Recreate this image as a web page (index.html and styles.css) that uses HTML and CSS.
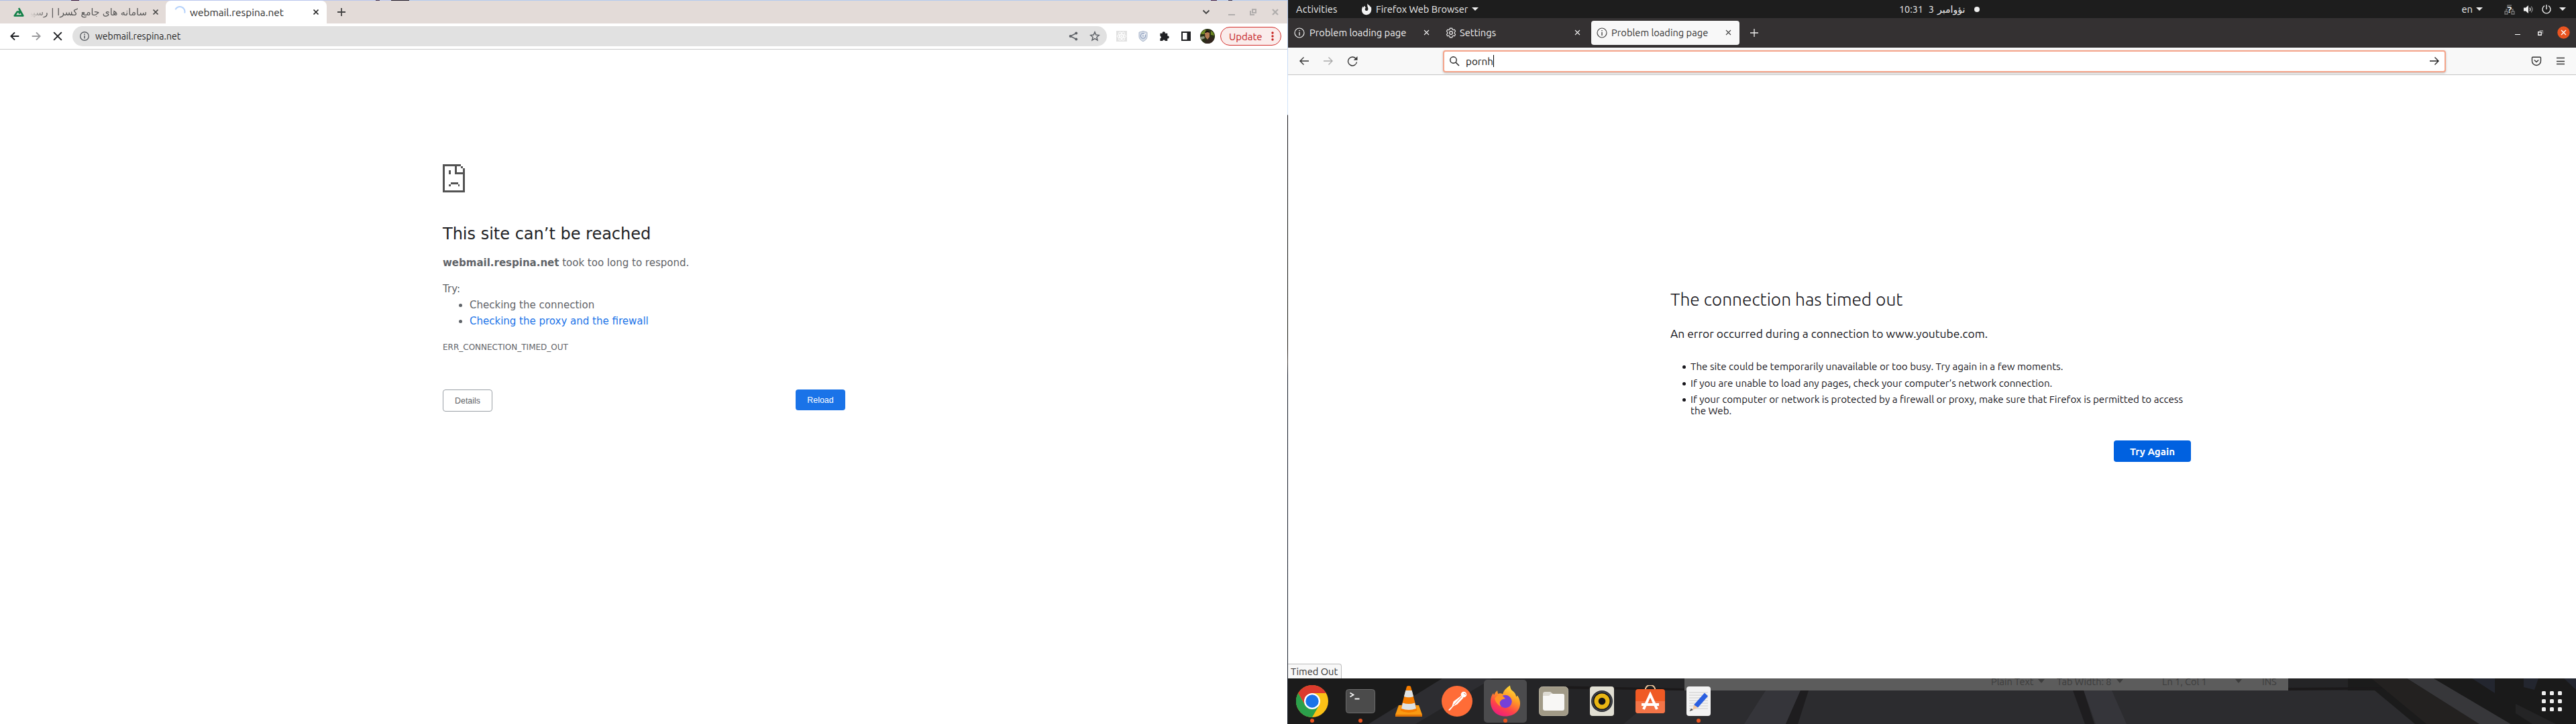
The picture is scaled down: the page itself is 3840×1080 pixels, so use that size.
FILE: index.html
```html
<!DOCTYPE html>
<html lang="en">
<head>
<meta charset="utf-8">
<title>Desktop</title>
<link rel="stylesheet" href="styles.css">
</head>
<body>
<div class="desktop">
  <section class="chrome">
    <div class="wallpaper-top"></div>
    <div class="c-tabs">
      <div class="c-tab">
        <svg class="fav" width="18" height="18" viewBox="0 0 18 18"><path d="M9 3.2 15.3 14.5H2.7L6.8 8.5H11L9.2 11.5" fill="none" stroke="#128048" stroke-width="2.6" stroke-linejoin="round"/></svg>
        <div class="c-title-fa" dir="rtl">سامانه های جامع کسرا | رسپینا</div>
        <svg class="x1" width="10" height="10" viewBox="0 0 10 10"><path d="M1.5 1.5l7 7m0-7l-7 7" stroke="#444" stroke-width="1.7"/></svg>
      </div>
      <div class="c-tab c-active">
        <svg class="spin" width="18" height="18" viewBox="0 0 18 18"><path d="M2.4 5.2A7.4 7.4 0 0 1 16.2 10.4" fill="none" stroke="#b5d2fb" stroke-width="2"/></svg>
        <div class="c-title">webmail.respina.net</div>
        <svg class="x2" width="10" height="10" viewBox="0 0 10 10"><path d="M1.5 1.5l7 7m0-7l-7 7" stroke="#222" stroke-width="1.7"/></svg>
      </div>
      <svg class="c-plus" width="14" height="14" viewBox="0 0 14 14"><path d="M7 1v12M1 7h12" stroke="#444" stroke-width="1.8"/></svg>
      <div class="c-win">
        <svg width="12" height="8" viewBox="0 0 12 8"><path d="M1.5 1.5L6 6l4.500-4.500" fill="none" stroke="#444" stroke-width="1.9"/></svg>
        <svg class="c-min" width="10" height="12" viewBox="0 0 10 12"><path d="M0 10h10" stroke="#b0adac" stroke-width="2"/></svg>
        <svg class="c-res" width="10" height="10" viewBox="0 0 10 10"><path d="M4 1h5v5H4zM1 3v6h6" fill="none" stroke="#b0adac" stroke-width="2"/></svg>
        <svg class="c-cls" width="10" height="10" viewBox="0 0 10 10"><path d="M1 1l8 8M9 1L1 9" stroke="#b0adac" stroke-width="2.2"/></svg>
      </div>
    </div>
    <div class="c-bar">
      <svg class="nav" viewBox="0 0 24 24"><path d="M19 12H6m6-6.200L5.800 12l6.200 6.200" fill="none" stroke="#202124" stroke-width="2.200"/></svg>
      <svg class="nav" viewBox="0 0 24 24"><path d="M5 12h13m-6-6.200l6.200 6.200-6.200 6.200" fill="none" stroke="#9a9a9c" stroke-width="2.200"/></svg>
      <svg class="nav" viewBox="0 0 24 24"><path d="M5.500 5.500l13 13m0-13l-13 13" stroke="#202124" stroke-width="2.200"/></svg>
      <div class="omni">
        <svg width="16" height="16" viewBox="0 0 16 16"><circle cx="8" cy="8" r="6.300" fill="none" stroke="#5f6368" stroke-width="1.4"/><path d="M8 7v4.500M8 4.300v1.600" stroke="#5f6368" stroke-width="1.600"/></svg>
        <span class="c-url">webmail.respina.net</span>
        <svg class="share" width="16" height="16" viewBox="0 0 16 16"><path d="M12.500 3.500L3.500 8l9 4.500" fill="none" stroke="#5f6368" stroke-width="1.500"/><g fill="#5f6368"><circle cx="12.300" cy="3.400" r="2"/><circle cx="3.700" cy="8" r="2"/><circle cx="12.300" cy="12.600" r="2"/></g></svg>
        <svg class="star" width="16" height="16" viewBox="0 0 16 16"><path d="M8 1.800l1.800 4.300 4.600.4-3.500 3 1.100 4.500L8 11.600 4 14l1.100-4.500-3.500-3 4.600-.4z" fill="none" stroke="#5f6368" stroke-width="1.500"/></svg>
      </div>
      <div class="exts">
        <svg class="ext" viewBox="0 0 16 16"><path d="M0 0h16v16H0z" fill="#e2e2e2"/><g fill="none" stroke="#fff" stroke-width="1"><ellipse cx="8" cy="8" rx="6.800" ry="2.600"/><ellipse cx="8" cy="8" rx="6.800" ry="2.600" transform="rotate(60 8 8)"/><ellipse cx="8" cy="8" rx="6.800" ry="2.600" transform="rotate(120 8 8)"/></g><circle cx="8" cy="8" r="1.200" fill="#fff"/></svg>
        <svg class="ext" viewBox="0 0 16 16"><path d="M8 .5l6 1.700v6c0 4-3 6.300-6 7.500-3-1.200-6-3.500-6-7.500v-6z" fill="#d6dde8" stroke="#aab6ca"/><circle cx="8" cy="7.500" r="3.600" fill="#e8edf4" stroke="#93a2c0" stroke-width="1.300"/><path d="M8 7.500l3.500-3.500" stroke="#fff" stroke-width="1.600"/><circle cx="8" cy="7.500" r="1.300" fill="#a9b6cd"/></svg>
        <svg class="ext" viewBox="0 0 16 16"><path d="M1.400 3.800h3.400a2 2 0 1 1 3.900 0h3.600v3.700a2 2 0 1 1 0 3.900V15H8.800a1.900 1.900 0 0 0-3.700 0H1.400v-3.600a1.900 1.900 0 0 0 0-3.700z" fill="#202124"/></svg>
        <svg class="ext" viewBox="0 0 16 16"><path d="M1 1h14v14H1zM3 3v10h6.500V3z" fill="#202124" fill-rule="evenodd"/></svg>
        <svg class="avatar" viewBox="0 0 22 22"><defs><clipPath id="av"><circle cx="11" cy="11" r="11"/></clipPath></defs><g clip-path="url(#av)"><path fill="#2a3016" d="M0 0h22v22H0z"/><path fill="#6d8a22" d="M2 5l5-4 2 2-3 5H1zM16 3l4 3 1 4-5-1z"/><path fill="#8f9680" d="M0 12l6-1 1 3-7 3z"/><path fill="#b47a52" d="M7 5h7v7l-3 4-3.500-4z"/><path fill="#1b130e" d="M7 6C7 1.500 14 1.500 14 6l-3-1-3 1z"/><path fill="#33261f" d="M6 22l3-6 2 1 4-5 5 2 2 8z"/></g></svg>
      </div>
      <div class="update"><span>Update</span><svg width="4" height="14" viewBox="0 0 4 14" fill="#c5221f"><circle cx="2" cy="2" r="1.700"/><circle cx="2" cy="7" r="1.700"/><circle cx="2" cy="12" r="1.700"/></svg></div>
    </div>
    <main class="c-page">
      <svg class="sad" width="33" height="42" viewBox="0 0 11 14" shape-rendering="crispEdges" fill="#535353"><path d="M0 0h9v1h1v1h1v12H0zM1 1v12h9V5H6V1zM7 1v3h3V2H9V1z" fill-rule="evenodd"/><path d="M3 3h1v2H3zM4 9h3.500v1H4zM3 10h1v1H3zM7.500 10h.9v1h-.9z"/></svg>
      <h1 class="c-h1">This site can’t be reached</h1>
      <p class="c-p"><b>webmail.respina.net</b> took too long to respond.</p>
      <p class="c-try">Try:</p>
      <ul class="c-ul"><li>Checking the connection</li><li><a>Checking the proxy and the firewall</a></li></ul>
      <p class="c-code">ERR_CONNECTION_TIMED_OUT</p>
      <div class="c-actions"><button class="details">Details</button><button class="reload">Reload</button></div>
    </main>
  </section>
  <div class="seam"></div>
  <section class="right">
    <header class="topbar">
      <span class="act">Activities</span>
      <svg class="fx-mono" width="16" height="18" viewBox="0 0 16 18"><path d="M8 17.200A6.800 6.800 0 0 1 1 10C1 7 2 5.500 3 4.500v2C4 4.500 5 4 6 3.800L5.800 6l2.200.5c-2 .2-2.500 1.500-2.200 2.700C6.500 12 10.500 11.500 10.500 8.500 10.500 6 8.500 4 9.500.5c1.200 2 3 2.500 4 4 .5.600.5 1 .5 1.500l.8-1C16 9 15.500 17 8 17.200z" fill="#f2f2f2"/></svg>
      <span class="app">Firefox Web Browser</span>
      <i class="caret ca1"></i>
      <span class="clock"><span class="time">10:31</span><span class="day">3</span><span class="mon" dir="rtl">نؤوامبر</span><i class="dot"></i></span>
      <span class="sys"><span>en</span><i class="caret"></i>
        <svg class="net" width="16" height="16" viewBox="0 0 16 16"><g fill="none" stroke="#777" stroke-width="1.300"><path d="M1 11h4v4H1zM11 11h4v4h-4zM3 11V8h2m8 3V8h-2M5 6V2h6"/></g><text x="8" y="13" text-anchor="middle" class="netq">?</text></svg>
        <svg class="vol" width="16" height="16" viewBox="0 0 16 16"><path d="M1 5.500h3L8 2v12L4 10.500H1z" fill="#f2f2f2"/><path d="M10 5.500q1.700 2.500 0 5" fill="none" stroke="#f2f2f2" stroke-width="1.300"/><path d="M12.300 3.500q3.200 4.500 0 9" fill="none" stroke="#999" stroke-width="1.200"/></svg>
        <svg class="pow" width="16" height="16" viewBox="0 0 16 16"><path d="M5 2.700a6 6 0 1 0 6 0M8 1v7" fill="none" stroke="#e8e8e8" stroke-width="1.400"/></svg>
        <i class="caret"></i></span>
    </header>
    <div class="f-tabs">
      <div class="f-tab">
        <svg width="16" height="16" viewBox="0 0 16 16"><circle cx="8" cy="8" r="7" fill="none" stroke="#f0f0f0" stroke-width="1.200"/><path d="M8 7v5M8 4v1.600" stroke="#f0f0f0" stroke-width="1.400"/></svg>
        <span>Problem loading page</span>
        <svg class="fx" width="9" height="9" viewBox="0 0 9 9"><path d="M1 1l7 7m0-7L1 8" stroke="#eee" stroke-width="1.100"/></svg>
      </div>
      <div class="f-tab f-mid">
        <svg width="16" height="16" viewBox="0 0 16 16"><path d="M8 1l1.700.2.400 1.800 1.300.8 1.800-.6 1.400 2.300-1.200 1.500v2l1.200 1.500-1.400 2.300-1.800-.6-1.300.8-.4 1.800H6.300L5.900 13l-1.300-.8-1.800.6-1.400-2.300L2.600 9V7L1.400 5.500l1.400-2.300 1.800.6L5.900 3l.4-1.800z" fill="none" stroke="#f0f0f0" stroke-width="1.200" stroke-linejoin="round"/><circle cx="8" cy="8" r="2.400" fill="none" stroke="#f0f0f0" stroke-width="1.200"/></svg>
        <span class="set">Settings</span>
        <svg class="fx" width="9" height="9" viewBox="0 0 9 9"><path d="M1 1l7 7m0-7L1 8" stroke="#eee" stroke-width="1.100"/></svg>
      </div>
      <div class="f-tab f-active">
        <svg width="16" height="16" viewBox="0 0 16 16"><circle cx="8" cy="8" r="7" fill="none" stroke="#444" stroke-width="1.200"/><path d="M8 7v5M8 4v1.600" stroke="#444" stroke-width="1.400"/></svg>
        <span>Problem loading page</span>
        <svg class="fx" width="9" height="9" viewBox="0 0 9 9"><path d="M1 1l7 7m0-7L1 8" stroke="#444" stroke-width="1.100"/></svg>
      </div>
      <svg class="f-plus" width="12" height="12" viewBox="0 0 12 12"><path d="M6 0v12M0 6h12" stroke="#f0f0f0" stroke-width="1.300"/></svg>
      <div class="f-win">
        <svg width="8" height="8" viewBox="0 0 8 8"><path d="M0 6.500h8" stroke="#fff"/></svg>
        <svg width="8" height="8" viewBox="0 0 8 8"><path d="M.75 2.750h4.500v4.500H.75z" fill="none" stroke="#fff" stroke-width="1.300"/><path d="M2.500.5h5v5" fill="none" stroke="#999"/></svg>
        <svg width="19" height="19" viewBox="0 0 19 19"><circle cx="9.500" cy="9.500" r="9.200" fill="#e95420"/><path d="M6 6l7 7m0-7l-7 7" stroke="#fff" stroke-width="1.400"/></svg>
      </div>
    </div>
    <div class="f-bar">
      <svg class="fb" viewBox="0 0 16 16"><path d="M15 8H2m5.500-5.500L2 8l5.500 5.500" fill="none" stroke="#333" stroke-width="1.400"/></svg>
      <svg class="fb" viewBox="0 0 16 16"><path d="M1 8h13M8.500 2.500L14 8l-5.500 5.500" fill="none" stroke="#aaa" stroke-width="1.400"/></svg>
      <svg class="fb" viewBox="0 0 16 16"><path d="M14.500 9.500A6.500 6.500 0 1 1 12.800 4" fill="none" stroke="#333" stroke-width="1.400"/><path d="M15.500 1v5.800H9.700z" fill="#333"/></svg>
      <div class="f-url">
        <svg width="16" height="16" viewBox="0 0 16 16"><circle cx="6.500" cy="6.500" r="4.700" fill="none" stroke="#222" stroke-width="1.400"/><path d="M10 10l5 5" stroke="#222" stroke-width="1.500"/></svg>
        <span class="typed">pornh</span><i class="cursor"></i>
        <svg class="go" width="16" height="16" viewBox="0 0 16 16"><path d="M1 8h13M8.500 2.500L14 8l-5.500 5.500" fill="none" stroke="#222" stroke-width="1.400"/></svg>
      </div>
      <svg class="pocket" width="16" height="16" viewBox="0 0 16 16"><path d="M2.500 2.200h11q1 0 1 1V8a6.500 6.500 0 0 1-13 0V3.200q0-1 1-1zM4.800 6.500L8 9.500l3.200-3" fill="none" stroke="#333" stroke-width="1.400"/></svg>
      <svg class="menu" width="12" height="12" viewBox="0 0 12 12"><path d="M0 1.500h12M0 6.500h12M0 10.500h12" stroke="#333" stroke-width="1.300"/></svg>
    </div>
    <main class="f-page">
      <h1 class="f-h1">The connection has timed out</h1>
      <p class="f-p">An error occurred during a connection to www.youtube.com.</p>
      <ul class="f-ul">
        <li>The site could be temporarily unavailable or too busy. Try again in a few moments.</li>
        <li>If you are unable to load any pages, check your computer’s network connection.</li>
        <li>If your computer or network is protected by a firewall or proxy, make sure that Firefox is permitted to access<br>the Web.</li>
      </ul>
      <button class="again">Try Again</button>
      <div class="status">Timed Out</div>
    </main>
    <footer class="dock">
      <svg class="wood" viewBox="0 0 1920 68" preserveAspectRatio="none">
        <path fill="#1b1b1b" d="M0 0h1920v68H0z"/><path fill="#242426" d="M240 0h1340v68H130z"/><path fill="#2d2d31" d="M230 0h75L190 68h-70z"/>
        <path fill="#2c2c2f" d="M560 18h1060l60 50H500z"/><path fill="#35353a" d="M712 18h52l-22 50h-62zM1186 18h42l22 50h-46z"/><path fill="#1e1d1f" d="M764 18h12l-16 50h-18zM1170 18h16l16 50h-14z"/>
        <path fill="#1b191a" d="M390 11l201 4v3l-201-3zM1491 14l140-1v3l-140 2z"/><path fill="#232120" d="M1615 0h52l110 68h-80z"/><path fill="#37373a" d="M1668 0h40l115 68h-47z"/><path fill="#1a1a1a" d="M1708 0h212v68h-97z"/><path fill="#23262f" d="M1765 0h34v22zM1842 0h22l-6 17-16-4zM1902 0h18v17z"/><path fill="#242425" d="M1830 38l60 30h-35l-25-16z"/>
      </svg>
      <div class="ghost"><span class="g1">Plain Text</span><i></i><span class="g2">Tab Width: 8</span><i></i><span class="g3">Ln 1, Col 1</span><i class="gi3"></i><span class="g4">INS</span></div>
      <div class="apps">
        <div class="appi run"><svg viewBox="0 0 48 48"><circle cx="24" cy="24" r="24" fill="#fbc116"/><path d="M3.200 12A24 24 0 0 1 44.800 12H24L13.600 30z" fill="#db3b2d"/><path d="M3.200 12A24 24 0 0 0 24 48l10.400-18L24 24l-10.400 6z" fill="#2ba04b"/><circle cx="24" cy="24" r="12" fill="#fff"/><circle cx="24" cy="24" r="9.700" fill="#1a73e8"/></svg></div>
        <div class="appi run"><svg viewBox="0 0 48 48"><rect x="2.500" y="6.500" width="43" height="35" rx="4" fill="#4b4b4b" stroke="#6c6c6c"/><path d="M8.500 11.500l5 3-5 3M15.500 20.500h7" fill="none" stroke="#f4f4f4" stroke-width="1.800"/></svg></div>
        <div class="appi"><svg viewBox="0 0 48 48"><path d="M9 30h30l5 14v3H4v-3z" fill="#f99a12"/><path d="M4 44h40v3H4z" fill="#e07408"/><path d="M21 2q3-2 6 0l9.500 36q-12.500 6-25 0z" fill="#f57c00"/><path d="M19.300 8h9.400l2.400 9q-7 2.500-14.200 0zM15 26.500q9 3 18 0l2 8.500q-11 4-22 0z" fill="#dfe3e4"/></svg></div>
        <div class="appi"><svg viewBox="0 0 48 48"><circle cx="24" cy="24" r="23" fill="#ff6c37"/><g fill="#fff"><circle cx="34" cy="14" r="4.300"/><path d="M30.500 15.500l3 3.500-9 9.500-6 3-5 6-2 .5v-1.500l5-5 2-7z"/></g><path d="M31 17L19 30M34 12l3 2" stroke="#ff6c37" stroke-width="1"/></svg></div>
        <div class="appi run focus"><svg viewBox="0 0 48 48"><defs><linearGradient id="fg" x1=".8" y1="0" x2=".3" y2="1"><stop offset="0" stop-color="#ffe83b"/><stop offset=".4" stop-color="#ff9a26"/><stop offset=".7" stop-color="#ff4646"/><stop offset="1" stop-color="#ec1a80"/></linearGradient></defs><path d="M24 46.500C10 46.500 2 36.500 2 24.500 2 19 4 14 6 12l1 3q2-5 5-7l1 5q4-1.500 7 .5Q22 6 31 .5q0 6 5 9 4 4 4 8l2-2q4 6 4 12c0 10-8 19-22 19z" fill="url(#fg)"/><circle cx="24" cy="24.500" r="9.700" fill="#7540d8"/><path d="M8 20q5-7 11-5l5 5-5 1.500-3 3q-1 4 2 8-8-4-10-12.500z" fill="#ff9427"/></svg></div>
        <div class="appi"><svg viewBox="0 0 48 48"><rect x="2.500" y="2.500" width="43" height="43" rx="5" fill="#a19a87" stroke="#b7b09e"/><path d="M8 13q0-3 3-3h8l4 3h14q3 0 3 3v4H8z" fill="#dedbd3"/><path d="M8 16h9l3-3h17q3 0 3 3v19q0 3-3 3H11q-3 0-3-3z" fill="#f8f7f5"/></svg></div>
        <div class="appi"><svg viewBox="0 0 48 48"><rect x="6" y="2" width="36" height="44" rx="4" fill="#e1dfd3"/><circle cx="24" cy="24" r="16" fill="#2b2d33"/><circle cx="24" cy="24" r="14" fill="#15161a" stroke="#555a63"/><circle cx="24" cy="24" r="11.500" fill="#e9b613"/><circle cx="24" cy="24" r="5.300" fill="#151515"/></svg></div>
        <div class="appi"><svg viewBox="0 0 48 48"><path d="M17 9V5q2-5 7-5t7 5v4" fill="none" stroke="#efc79c" stroke-width="2"/><rect x="2" y="6" width="44" height="36" rx="4" fill="#f05a24"/><path d="M2 24h44v14q0 4-4 4H6q-4 0-4-4z" fill="#f37447"/><path d="M14 36l10-22 10 22M11 29h26" fill="none" stroke="#fff" stroke-width="4"/></svg></div>
        <div class="appi run"><svg viewBox="0 0 48 48"><rect x="6" y="2" width="36" height="44" rx="4" fill="#f3f3f3"/><path d="M10 11h28M10 15h28M10 19h28M10 23h28M10 27h28M10 31h28M10 35h28" stroke="#ccc"/><path d="M33 11.500l5 5-15 17-6-4z" fill="#2a5fe0"/><path d="M17 29.500l6 4-8 3.500z" fill="#f3c9a0"/><path d="M13 35l3 2-5.500 2z" fill="#444"/></svg></div>
      </div>
      <div class="grid9"><i></i><i></i><i></i><i></i><i></i><i></i><i></i><i></i><i></i></div>
    </footer>
  </section>
</div>
</body>
</html>
```
FILE: styles.css
```css
* { box-sizing: border-box; }
body { margin: 0; font-family: Ubuntu, "Open Sans", "DejaVu Sans", sans-serif; font-size: 14.667px; }
h1, p, ul { margin: 0; padding: 0; font-weight: normal; }
svg { display: block; flex: none; }
span { white-space: nowrap; }
.desktop { display: flex; width: 3840px; height: 1080px; overflow: hidden; background: #fff; }

/* left monitor: Chrome */
.chrome { width: 1919px; display: flex; flex-direction: column; }
.seam { width: 1px; background: linear-gradient(#b7cdf2 0, #d5e6f8 171px, #16161c 172px, #181a12 500px, #241d18 520px, #4a4540 540px, #161c28 560px, #1c2430 1080px); }
.wallpaper-top { height: 1px; background: linear-gradient(90deg, #aebfe6 0 106px, #31113a 106px 118px, #b9c6ee 118px 560px, #392a50 560px 566px, #b9c6ee 566px 583px, #1c1626 583px 610px, #b4cbf0 610px 1805px, #3b1c48 1805px 1814px, #b4cbf0 1814px 1831px, #2a2a50 1831px 1837px, #b4cbf0 1837px); }
.c-tabs { height: 34px; background: #e3dbd8; display: flex; align-items: center; }
.c-tab { width: 247px; height: 34px; display: flex; align-items: center; }
.fav { margin-left: 19px; }
.c-title-fa { margin-left: 8px; width: 174px; overflow: hidden; white-space: nowrap; font: 14px/24px "DejaVu Sans", sans-serif; color: #555; -webkit-mask-image: linear-gradient(90deg, transparent, #000 24px); mask-image: linear-gradient(90deg, transparent, #000 24px); }
.x1 { margin-left: 8px; }
.c-active { width: 240px; background: #fff; border-radius: 8px 8px 0 0; color: #2b2b2b; }
.spin { margin-left: 12px; }
.c-title { margin-left: 6px; width: 183px; font-size: 15.400px; }
.c-plus { margin-left: 15px; }
.c-win { margin-left: auto; margin-right: 13px; display: flex; align-items: center; }
.c-min { margin-left: 27px; }
.c-res { margin-left: 22px; }
.c-cls { margin-left: 23px; }
.c-bar { height: 39px; border-bottom: 1px solid #c9c9c9; display: flex; align-items: center; padding-left: 10px; }
.nav { width: 24px; height: 24px; margin-right: 8px; }
.nav:nth-child(3) { margin-right: 10px; }
.nav path { transform: scale(.9); transform-origin: center; }
.omni { width: 1542px; height: 30px; border-radius: 15px; background: #e1e1e1; display: flex; align-items: center; padding: 0 10px; color: #1f1f1f; }
.c-url { margin-left: 8px; font-size: 14px; }
.share { margin-left: auto; }
.star { margin-left: 16px; }
.exts { display: flex; align-items: center; margin-left: 14px; gap: 16px; }
.ext { width: 16px; height: 16px; }
.avatar { width: 22px; height: 22px; margin-left: -3px; }
.update { margin-left: 8px; width: 91px; height: 28px; border: 1px solid #d32f2c; border-radius: 14px; background: #faeceb; color: #c5221f; display: flex; align-items: center; padding: 0 10px 0 12px; justify-content: space-between; font-size: 15px; }
.c-page { flex: 1; width: 600px; margin-left: 660px; padding-top: 171px; color: #5f6368; font-family: "DejaVu Sans", sans-serif; font-size: 15px; }
.c-h1 { margin-top: 47px; font-size: 24px; line-height: 30px; color: #202124; }
.c-p { margin-top: 16px; line-height: 24px; }
.c-try { margin-top: 15px; line-height: 24px; }
.c-ul { padding-left: 40px; line-height: 24px; }
.c-ul a { color: #1a73e8; }
.c-code { margin-top: 15px; font-size: 12px; line-height: 24px; }
.c-actions { margin-top: 51px; display: flex; justify-content: space-between; align-items: flex-start; }
.c-actions button { font: 12.4px "Liberation Sans", sans-serif; border-radius: 4px; padding: 0; }
.details { width: 74px; height: 33px; border: 1px solid #9aa0a6; background: #fff; color: #5f6368; }
.reload { width: 74px; height: 31px; border: 0; background: #1a73e8; color: #fff; }

/* right monitor: GNOME bar, Firefox, dock */
.right { width: 1920px; display: flex; flex-direction: column; }
.topbar { height: 27px; background: #1d1d1d; color: #eee; display: flex; align-items: center; position: relative; }
.act { margin-left: 12px; width: 97px; letter-spacing: .15px; }
.app { margin-left: 6px; width: 137px; letter-spacing: -.03px; }
.caret { width: 0; height: 0; border: 5px solid transparent; border-top-color: #eee; border-bottom: 0; }
.ca1 { margin-left: 6px; }
.clock { position: absolute; left: 911px; top: 0; height: 27px; display: flex; align-items: center; }
.time { font-size: 14.300px; }
.day { margin-left: 8px; }
.mon { margin-left: 5px; font: 14px "DejaVu Sans", sans-serif; }
.dot { width: 8px; height: 8px; border-radius: 50%; background: #eee; margin-left: 14px; }
.sys { margin-left: auto; margin-right: 15px; display: flex; align-items: center; }
.sys .caret { margin-left: 5px; }
.net { margin-left: 32px; }
.vol { margin-left: 12px; }
.pow { margin-left: 11px; }
.sys .pow + .caret { margin-left: 11px; }
.netq { font: bold 13px "Open Sans", sans-serif; fill: #eee; }
.f-tabs { height: 44px; background: #343132; border-bottom: 1px solid #252324; display: flex; align-items: center; color: #f0f0f0; }
.f-tab { width: 222px; height: 36px; border-radius: 4px; display: flex; align-items: center; padding: 0 11px 0 9px; }
.f-tab span { margin-left: 7px; }
.f-mid { width: 217px; margin-left: 5px; padding: 0 8px; }
.f-tab .set { margin-left: 5px; }
.fx { margin-left: auto; }
.f-active { background: #f8f8f8; color: #333; width: 221px; margin: 0 4px 0 8px; padding: 0 12px 0 8px; }
.f-active span { margin-left: 6px; }
.f-plus { margin-left: 12px; }
.f-win { margin-left: auto; margin-right: 9px; display: flex; align-items: center; gap: 26px; }
.f-win svg:last-child { margin-left: -5px; }
.f-bar { height: 41px; background: #f8f8f8; border-bottom: 1px solid #c4c4c4; display: flex; align-items: center; padding-left: 16px; }
.fb { width: 16px; height: 16px; margin-right: 20px; }
.f-url { margin-left: 107px; width: 1495px; height: 33px; border: 2px solid #f5a48a; border-radius: 4px; background: #fff; display: flex; align-items: center; padding: 0 7px; box-shadow: 0 1px 3px #bbb; color: #111; }
.typed { margin-left: 9px; font-size: 15.200px; }
.cursor { width: 1px; height: 18px; background: #000; }
.go { margin-left: auto; }
.pocket { margin-left: 127px; }
.menu { margin-left: 22px; }
.f-page { flex: 1; position: relative; padding-left: 570px; color: #15141a; }
.f-h1 { font-weight: 300; font-size: 26.350px; line-height: 36px; margin-top: 316px; }
.f-p { margin-top: 22px; font-size: 17.400px; line-height: 24px; }
.f-ul { margin-top: 28px; padding-left: 30px; font-size: 15.180px; line-height: 17px; list-style: none; }
.f-ul li { margin-bottom: 7.500px; }
.f-ul li::before { content: ""; display: inline-block; width: 5px; height: 5px; border-radius: 50%; background: #15141a; margin: 0 7px 2px -12px; }
.again { display: block; margin: 36px 0 0 661px; width: 115px; height: 32px; border: 0; border-radius: 4px; background: #0061e0; color: #fff; font: bold 15.100px Ubuntu, "Open Sans", sans-serif; padding: 0; }
.status { position: absolute; left: 0; bottom: 0; width: 80px; height: 22px; border: 1px solid #bbb; border-left: 0; border-bottom: 0; border-radius: 0 4px 0 0; background: #f8f8f8; color: #333; line-height: 22px; padding-left: 4px; }
.dock { height: 68px; position: relative; display: flex; align-items: center; background: #1d1d1e; }
.wood { position: absolute; inset: 0; width: 1920px; height: 68px; }
.ghost { position: absolute; left: 591px; top: 0; width: 900px; height: 18px; background: #5c5c5c; color: #3d3d3d; overflow: hidden; display: flex; align-items: center; padding-left: 457px; line-height: 10px; }
.ghost span { margin-top: -9px; font-size: 14.500px; }
.ghost i { width: 0; border: 5px solid transparent; border-top: 6px solid #3d3d3d; border-bottom: 0; margin: -10px 0 0 6px; }
.g1 { width: 64px; }
.g2 { width: 83px; margin-left: 18px; }
.g3 { width: 66px; margin-left: 58px; }
.ghost .gi3 { margin-left: 43px; }
.g4 { margin-left: 30px; }
.apps { display: flex; position: relative; padding-left: 4px; gap: 8px; }
.appi { width: 64px; height: 64px; display: flex; align-items: center; justify-content: center; border-radius: 5px; position: relative; }
.appi svg { width: 48px; height: 48px; }
.focus { background: #4b4b4d; }
.run::after { content: ""; position: absolute; left: 29px; bottom: 0; width: 6px; height: 6px; border-radius: 50%; background: #e95420; }
.grid9 { position: relative; margin: 0 21px 0 auto; display: grid; grid-template-columns: repeat(3, 6px); gap: 6px; }
.grid9 i { width: 6px; height: 6px; border-radius: 1.500px; background: #eee; }
```
